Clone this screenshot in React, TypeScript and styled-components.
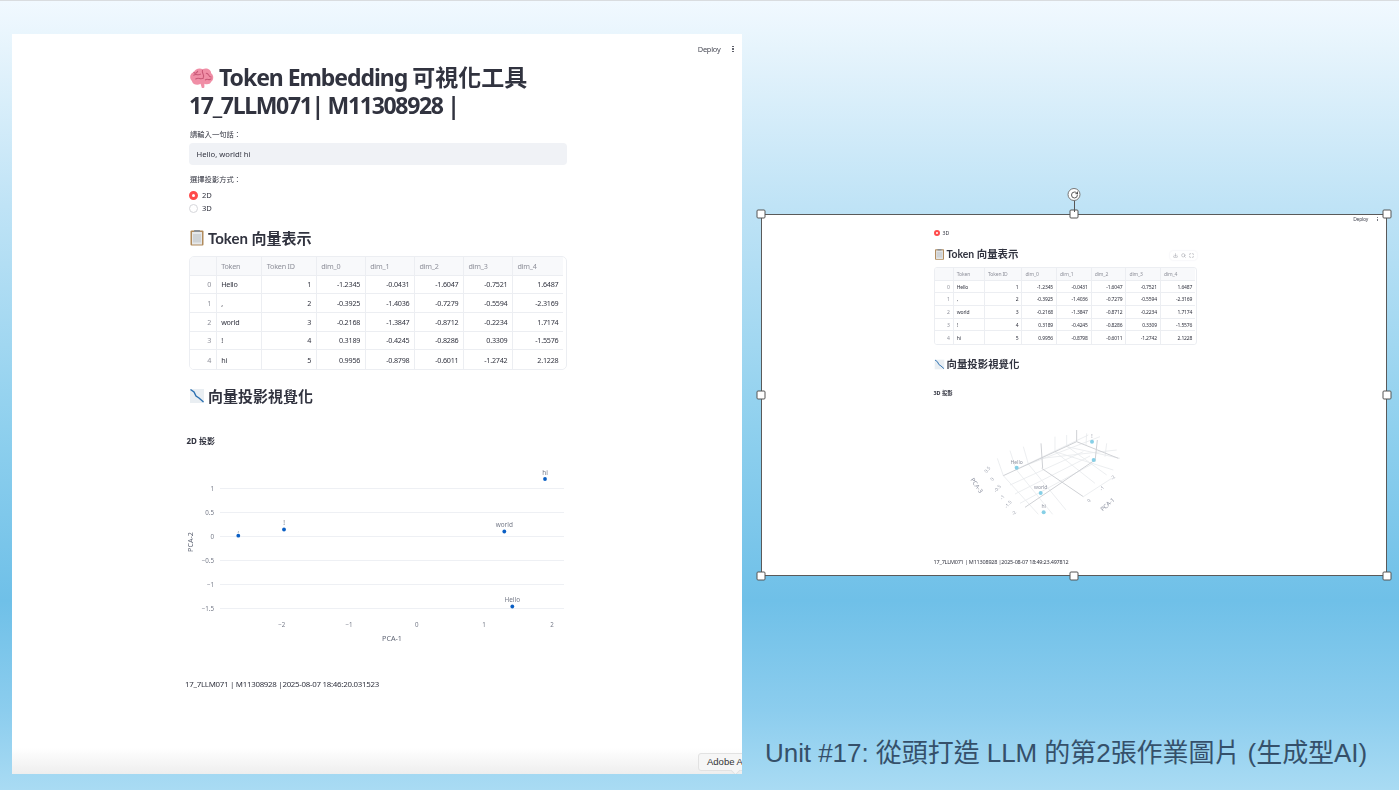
import React from "react";
import styled, { createGlobalStyle } from "styled-components";
import { RotateCw, Download, Search, Maximize } from "lucide-react";

const FONT = `"Noto Sans", "Noto Sans CJK TC", sans-serif`;
const LATO = `Lato, "Noto Sans CJK TC", sans-serif`;

const Global = createGlobalStyle`
  html, body { margin: 0; padding: 0; height: 100%; overflow: hidden; }
  body { font-family: ${FONT}; }
`;

const Slide = styled.div`
  position: relative;
  width: 1399px;
  height: 790px;
  overflow: hidden;
  border-top: 1px solid #d9dcdf;
  box-sizing: border-box;
  background: linear-gradient(180deg, #f1f9ff 0%, #e6f4fc 6%, #bfe3f6 26%, #8fd0ee 54%, #6fc0e8 76%, #8ccdee 90%, #a9dbf3 100%);
`;

const LeftShot = styled.section`
  position: absolute;
  left: 12px;
  top: 33px;
  width: 730px;
  height: 740px;
  overflow: hidden;
  background: linear-gradient(180deg, #fff 0, #fff 96.5%, #eeeeee 100%);
`;

const LeftContent = styled.div`
  display: flex;
  flex-direction: column;
  width: 378px;
  margin-left: 177px;
  padding-top: 29px;
  filter: blur(0.45px);
  color: #31333f;
`;

const Title = styled.h1`
  margin: 0;
  font-size: 23px;
  line-height: 28px;
  font-weight: 700;
  letter-spacing: -1.05px;
  white-space: nowrap;
  color: #31333f;
  display: block;
  svg { vertical-align: -4px; margin-right: 5px; }
`;

const TitleCjk = styled.span`
  letter-spacing: 0;
`;

const TitleCode = styled.span`
  letter-spacing: -1.32px;
`;

const FieldLabel = styled.div<{ $mt: number }>`
  margin-top: ${(p) => p.$mt}px;
  margin-left: 1px;
  font-size: 7.3px;
  line-height: 10px;
  color: #31333f;
`;

const TextInput = styled.div`
  margin-top: 4px;
  height: 22px;
  border-radius: 4px;
  background: #f0f2f6;
  display: flex;
  align-items: center;
  padding-left: 7.5px;
  font-size: 7.7px;
  color: #31333f;
`;

const RadioGroup = styled.div`
  margin-top: 4.5px;
  display: flex;
  flex-direction: column;
`;

const RadioRow = styled.div<{ $size?: number; $h?: number }>`
  display: flex;
  align-items: center;
  gap: ${(p) => ((p.$size ?? 9) > 7 ? 4 : 3)}px;
  height: ${(p) => p.$h ?? 13}px;
  font-size: ${(p) => ((p.$size ?? 9) > 7 ? 7.6 : 5.2)}px;
  color: #31333f;
`;

const RadioDot = styled.span<{ $on: boolean; $size?: number }>`
  width: ${(p) => p.$size ?? 9}px;
  height: ${(p) => p.$size ?? 9}px;
  border-radius: 50%;
  box-sizing: border-box;
  background: #fff;
  border: ${(p) => (p.$on ? `${((p.$size ?? 9) * 0.36).toFixed(1)}px solid #ff4b4b` : "1px solid #d5d6da")};
`;

const Heading = styled.h2<{ $mt: number; $size: number; $lh: number }>`
  margin: ${(p) => p.$mt}px 0 0;
  font-family: ${LATO};
  font-size: ${(p) => p.$size}px;
  line-height: ${(p) => p.$lh}px;
  font-weight: 700;
  color: #31333f;
  white-space: nowrap;
  display: flex;
  align-items: center;
  gap: ${(p) => p.$size * 0.2}px;
`;

const TableBox = styled.div<{ $mt: number; $r: number }>`
  margin-top: ${(p) => p.$mt}px;
  border: 1px solid #eceef2;
  border-radius: ${(p) => p.$r}px;
  overflow: hidden;
  background: #fff;
`;

const Row = styled.div<{ $cols: string; $h: number; $size: number }>`
  display: grid;
  grid-template-columns: ${(p) => p.$cols};
  height: ${(p) => p.$h}px;
  font-size: ${(p) => p.$size}px;
  letter-spacing: ${(p) => (p.$size * -0.03).toFixed(2)}px;
  &:last-child > * { border-bottom: 0; }
  & > *:last-child { border-right: 0; }
`;

const Cell = styled.div<{ $kind: "head" | "index" | "text" | "num"; $pad: number }>`
  display: flex;
  align-items: center;
  justify-content: ${(p) => (p.$kind === "num" || p.$kind === "index" ? "flex-end" : "flex-start")};
  padding: 0 ${(p) => p.$pad}px;
  box-sizing: border-box;
  border-right: 1px solid #eceef2;
  border-bottom: 1px solid #eceef2;
  white-space: nowrap;
  overflow: hidden;
  color: ${(p) => (p.$kind === "head" || p.$kind === "index" ? "#8d8f99" : "#31333f")};
  background: ${(p) => (p.$kind === "head" ? "#f8f9fb" : "#fff")};
`;

const SubTitle = styled.div<{ $mt: number; $size: number; $lh: number; $ml: number }>`
  margin: ${(p) => p.$mt}px 0 0 ${(p) => p.$ml}px;
  font-size: ${(p) => p.$size}px;
  line-height: ${(p) => p.$lh}px;
  font-weight: 700;
  color: #31333f;
`;

const ChartSvg = styled.svg<{ $ml: number }>`
  display: block;
  margin-left: ${(p) => p.$ml}px;
  flex: none;
`;

const Stamp = styled.div<{ $mt: number; $size: number; $lh: number; $ml: number }>`
  margin: ${(p) => p.$mt}px 0 0 ${(p) => p.$ml}px;
  font-size: ${(p) => p.$size}px;
  line-height: ${(p) => p.$lh}px;
  letter-spacing: ${(p) => (p.$size * -0.036).toFixed(2)}px;
  color: #31333f;
  white-space: nowrap;
`;

const TopBar = styled.div<{ $right: number; $top: number; $size: number; $gap: number }>`
  position: absolute;
  right: ${(p) => p.$right}px;
  top: ${(p) => p.$top}px;
  display: flex;
  align-items: center;
  gap: ${(p) => p.$gap}px;
  font-size: ${(p) => p.$size}px;
  letter-spacing: -0.25px;
  color: #4a4c57;
  filter: blur(0.3px);
`;

const Dots = styled.span<{ $dot: number }>`
  display: flex;
  flex-direction: column;
  gap: ${(p) => p.$dot * 0.6}px;
  i { display: block; width: ${(p) => p.$dot}px; height: ${(p) => p.$dot}px; border-radius: 50%; background: #4a4c57; }
`;

const AdobeTip = styled.div`
  position: absolute;
  left: 686px;
  top: 719px;
  width: 80px;
  height: 18px;
  border-radius: 3px;
  background: #f6f6f6;
  border: 1px solid #e2e2e2;
  box-sizing: border-box;
  padding-left: 8px;
  font-family: "Liberation Sans", sans-serif;
  font-size: 9.5px;
  line-height: 16px;
  color: #333;
  white-space: nowrap;
  &::after {
    content: "";
    position: absolute;
    left: 33px;
    bottom: -4px;
    width: 6px;
    height: 6px;
    background: #f6f6f6;
    transform: rotate(45deg);
    border-right: 1px solid #e2e2e2;
    border-bottom: 1px solid #e2e2e2;
  }
`;

const RightShot = styled.section`
  position: absolute;
  left: 761px;
  top: 213px;
  width: 626px;
  height: 362px;
  box-sizing: border-box;
  border: 1.5px solid #5a5a5a;
  background: #fff;
`;

const RightContent = styled.div`
  position: relative;
  display: flex;
  flex-direction: column;
  width: 263px;
  margin-left: 171.5px;
  padding-top: 13px;
  filter: blur(0.75px);
`;

const TableTools = styled.div`
  position: absolute;
  right: 0;
  top: 36px;
  display: flex;
  gap: 3px;
  padding: 2px 3px;
  border-radius: 3px;
  background: #fff;
  color: #8d8f99;
  box-shadow: 0 0 2px #e8e8ee;
`;

const Handle = styled.span<{ $h: number; $v: number }>`
  position: absolute;
  left: calc(${(p) => p.$h}% + ${(p) => ((p.$h - 50) / 50) * 0.75}px);
  top: calc(${(p) => p.$v}% + ${(p) => ((p.$v - 50) / 50) * 0.75}px);
  width: 9px;
  height: 9px;
  transform: translate(-50%, -50%);
  box-sizing: border-box;
  background: #fff;
  border: 1px solid #555;
  border-radius: 1.5px;
`;

const RotateStem = styled.span`
  position: absolute;
  left: 50%;
  top: -15px;
  width: 1px;
  height: 12px;
  background: #555;
`;

const RotateHandle = styled.span`
  position: absolute;
  left: 50%;
  top: -27px;
  width: 13px;
  height: 13px;
  transform: translateX(-50%);
  border-radius: 50%;
  box-sizing: border-box;
  background: #fff;
  border: 1px solid #777;
  display: flex;
  align-items: center;
  justify-content: center;
  color: #333;
`;

const Caption = styled.div`
  position: absolute;
  left: 765px;
  top: 735px;
  font-family: "Liberation Sans", "Noto Sans CJK TC", sans-serif;
  font-size: 26px;
  line-height: 34px;
  letter-spacing: -0.05px;
  color: #35506a;
  white-space: nowrap;
`;

const Brain = () => (
  <svg width="25" height="23" viewBox="0 0 26 23">
    <path d="M3 14C0 11 1 6 5 5C6 1 12 0 14 2C18 0 23 2 23 6C26 8 26 13 23 15C22 18 18 18 16 17L16 20C16 22 13 22 13 20L12 17C9 19 4 18 3 14Z" fill="#f08ea6" />
    <path d="M5 8C8 6 9 9 12 7M14 3C13 6 16 7 15 10M7 12C10 10 12 13 15 11M18 6C21 6 20 10 23 10M17 13C19 11 21 14 23 12M5 5C6 7 8 6 9 4" stroke="#c75675" strokeWidth="1.1" fill="none" strokeLinecap="round" />
  </svg>
);

const Clipboard = ({ size }: { size: number }) => (
  <svg width={size} height={size} viewBox="0 0 16 16">
    <rect x="1.5" y="0.5" width="13" height="15" rx="1" fill="#b08a5b" />
    <rect x="3" y="2" width="10" height="12.5" fill="#e6e8ea" />
    <rect x="4" y="4" width="8" height="8.5" fill="#cfd3d6" />
    <rect x="5" y="0" width="6" height="2" rx="0.5" fill="#8b8f94" />
  </svg>
);

const ChartDown = ({ size }: { size: number }) => (
  <svg width={size} height={size} viewBox="0 0 16 16">
    <rect x="1" y="1" width="14" height="14" fill="#e9eef2" />
    <path d="M1.5 1.5L5 4L7 8L10 10L14.5 14" stroke="#2a6fb0" strokeWidth="1.4" fill="none" />
  </svg>
);

const headers = ["", "Token", "Token ID", "dim_0", "dim_1", "dim_2", "dim_3", "dim_4"];
const rows = [
  ["0", "Hello", "1", "-1.2345", "-0.0431", "-1.6047", "-0.7521", "1.6487"],
  ["1", ",", "2", "-0.3925", "-1.4036", "-0.7279", "-0.5594", "-2.3169"],
  ["2", "world", "3", "-0.2168", "-1.3847", "-0.8712", "-0.2234", "1.7174"],
  ["3", "!", "4", "0.3189", "-0.4245", "-0.8286", "0.3309", "-1.5576"],
  ["4", "hi", "5", "0.9956", "-0.8798", "-0.6011", "-1.2742", "2.1228"],
];

const DataTable = ({ cols, headH, rowH, size, pad, mt, r }: { cols: string; headH: number; rowH: number; size: number; pad: number; mt: number; r: number }) => (
  <TableBox $mt={mt} $r={r}>
    <Row $cols={cols} $h={headH} $size={size}>
      {headers.map((h, i) => (
        <Cell key={i} $kind="head" $pad={pad}>{h}</Cell>
      ))}
    </Row>
    {rows.map((row) => (
      <Row key={row[0]} $cols={cols} $h={rowH} $size={size}>
        {row.map((v, i) => (
          <Cell key={i} $pad={pad} $kind={i === 0 ? "index" : i === 1 ? "text" : "num"}>{v}</Cell>
        ))}
      </Row>
    ))}
  </TableBox>
);

const Chart2D = () => {
  const gy: [string, number][] = [["1", 487.5], ["0.5", 511.5], ["0", 535.5], ["−0.5", 559.5], ["−1", 583.5], ["−1.5", 607.5]];
  const gx: [string, number][] = [["−2", 281.7], ["−1", 349], ["0", 416.7], ["1", 484], ["2", 552]];
  const pts: [string, number, number][] = [["hi", 545, 478], ["world", 504.3, 530.5], ["Hello", 512.3, 605.5], ["!", 284, 528.5], [",", 238.3, 534.7]];
  const tick = { fontSize: 6.2, fill: "#757a88", fontFamily: FONT };
  return (
    <ChartSvg $ml={-3} width="382" height="220" viewBox="186 445 382 220">
      {gy.map(([l, y]) => (
        <g key={l}>
          <line x1="220" x2="564" y1={y} y2={y} stroke="#eef0f4" strokeWidth="1" />
          <text x="214" y={y + 2.2} textAnchor="end" {...tick}>{l}</text>
        </g>
      ))}
      {gx.map(([l, x]) => (
        <text key={l} x={x} y="626" textAnchor="middle" {...tick}>{l}</text>
      ))}
      <text x="392" y="640" textAnchor="middle" fontSize="7.2" fill="#5f6574" fontFamily={FONT}>PCA-1</text>
      <text transform="translate(192.5 541) rotate(-90)" textAnchor="middle" fontSize="7.2" fill="#5f6574" fontFamily={FONT}>PCA-2</text>
      {pts.map(([l, x, y]) => (
        <g key={l}>
          <circle cx={x} cy={y} r="1.9" fill="#0a5fc4" />
          <text x={x} y={y - 4.2} textAnchor="middle" fontSize="6.4" fill="#757a88" fontFamily={FONT}>{l}</text>
        </g>
      ))}
    </ChartSvg>
  );
};

const Plot3D = () => {
  const light: [number, number, number, number][] = [
    [285, 150, 505, 45], [320, 135, 540, 50], [365, 115, 590, 90],
    [405, 95, 580, 150], [440, 80, 600, 115], [250, 167, 355, 283], [288, 148, 398, 283],
    [325, 132, 438, 270], [405, 95, 525, 190], [440, 78, 560, 165], [300, 250, 520, 130],
    [285, 222, 510, 108], [270, 195, 490, 95], [232, 115, 250, 167], [270, 92, 288, 148],
    [310, 80, 325, 132], [405, 50, 405, 95], [440, 45, 440, 80], [500, 40, 498, 75], [560, 70, 555, 110],
    [490, 230, 575, 175],
  ];
  const dark: [number, number, number, number][] = [
    [250, 167, 470, 65], [470, 65, 595, 115], [315, 262, 525, 120], [365, 145, 490, 230],
    [363, 70, 368, 145], [532, 60, 525, 125], [470, 30, 470, 65],
  ];
  const ticks: [string, number, number][] = [
    ["0.5", 206, 152], ["0", 220, 181], ["-0.5", 236, 209], ["-1", 251, 235], ["-1.5", 268, 256], ["-2", 285, 282],
    ["0", 510, 245], ["-1", 549, 208], ["-2", 582, 176],
  ];
  const pts: [string, number, number][] = [["Hello", 290, 143], ["world", 362, 219], ["hi", 371, 277], ["!", 516, 65], ["", 521, 120]];
  return (
    <ChartSvg $ml={0} width="220" height="159" viewBox="42 -69 660 477">
      {light.map((l, i) => <line key={i} x1={l[0]} y1={l[1]} x2={l[2]} y2={l[3]} stroke="#e8eaed" strokeWidth="2.5" />)}
      {dark.map((l, i) => <line key={i} x1={l[0]} y1={l[1]} x2={l[2]} y2={l[3]} stroke="#cfd1d5" strokeWidth="3" />)}
      {pts.map(([l, x, y]) => (
        <g key={x}>
          <circle cx={x} cy={y} r="6" fill="#86cfe6" />
          {l && <text x={x} y={y - 12} textAnchor="middle" fontSize="15" fill="#8f93a0" fontFamily={FONT}>{l}</text>}
        </g>
      ))}
      <text transform="translate(165 200) rotate(55)" textAnchor="middle" fontSize="18" fill="#8a8f9e" fontFamily={FONT}>PCA-3</text>
      <text transform="translate(567 258) rotate(-42)" textAnchor="middle" fontSize="18" fill="#8a8f9e" fontFamily={FONT}>PCA-1</text>
      {ticks.map(([l, x, y]) => (
        <text key={`${l}-${x}`} transform={`translate(${x} ${y}) rotate(-50)`} textAnchor="middle" fontSize="14" fill="#9a9fac" fontFamily={FONT}>{l}</text>
      ))}
    </ChartSvg>
  );
};

const handles: [number, number][] = [[0, 0], [50, 0], [100, 0], [0, 50], [100, 50], [0, 100], [50, 100], [100, 100]];

export default function App() {
  return (
    <Slide>
      <Global />
      <LeftShot>
        <LeftContent>
          <Title><Brain />Token Embedding <TitleCjk>可視化工具</TitleCjk><br /><TitleCode>17_7LLM071| M11308928 |</TitleCode></Title>
          <FieldLabel $mt={10}>請輸入一句話：</FieldLabel>
          <TextInput>Hello, world! hi</TextInput>
          <FieldLabel $mt={9}>選擇投影方式：</FieldLabel>
          <RadioGroup>
            <RadioRow><RadioDot $on />2D</RadioRow>
            <RadioRow><RadioDot $on={false} />3D</RadioRow>
          </RadioGroup>
          <Heading $mt={12.5} $size={15} $lh={22}><Clipboard size={16} />Token 向量表示</Heading>
          <DataTable mt={7} r={5} cols="26.7px 45.6px 54.4px 49px 49.3px 49px 49px 50px" headH={18.5} rowH={18.7} size={7.2} pad={4.5} />
          <Heading $mt={15} $size={15} $lh={22}><ChartDown size={16} />向量投影視覺化</Heading>
          <SubTitle $mt={28} $size={8} $lh={11} $ml={-2.5}>2D 投影</SubTitle>
          <Chart2D />
          <Stamp $mt={13} $size={7.9} $lh={10} $ml={-4}>17_7LLM071 | M11308928 |2025-08-07 18:46:20.031523</Stamp>
        </LeftContent>
        <TopBar $right={8} $top={10} $size={7.4} $gap={12}>
          Deploy
          <Dots $dot={1.6}><i /><i /><i /></Dots>
        </TopBar>
        <AdobeTip>Adobe Acrobat</AdobeTip>
      </LeftShot>

      <RightShot>
        <RightContent>
          <RadioRow $size={6} $h={10}><RadioDot $on $size={6} />3D</RadioRow>
          <Heading $mt={8} $size={10.4} $lh={16}><Clipboard size={11} />Token 向量表示</Heading>
          <TableTools>
            <Download size={5} /><Search size={5} /><Maximize size={5} />
          </TableTools>
          <DataTable mt={5} r={3} cols="19.3px 31.3px 37.3px 34.7px 34.7px 34.7px 34.5px 34.3px" headH={12.7} rowH={12.7} size={5} pad={3} />
          <Heading $mt={11} $size={10.4} $lh={16}><ChartDown size={11} />向量投影視覺化</Heading>
          <SubTitle $mt={17} $size={5.4} $lh={8} $ml={0}>3D 投影</SubTitle>
          <Plot3D />
          <Stamp $mt={2} $size={5.5} $lh={8} $ml={0}>17_7LLM071 | M11308928 |2025-08-07 18:49:23.497812</Stamp>
        </RightContent>
        <TopBar $right={8} $top={1} $size={5} $gap={9}>
          Deploy
          <Dots $dot={1}><i /><i /><i /></Dots>
        </TopBar>
        {handles.map(([h, v]) => <Handle key={`${h}-${v}`} $h={h} $v={v} />)}
        <RotateStem />
        <RotateHandle><RotateCw size={8} strokeWidth={2.4} /></RotateHandle>
      </RightShot>

      <Caption>Unit #17: 從頭打造 LLM 的第2張作業圖片 (生成型AI)</Caption>
    </Slide>
  );
}
